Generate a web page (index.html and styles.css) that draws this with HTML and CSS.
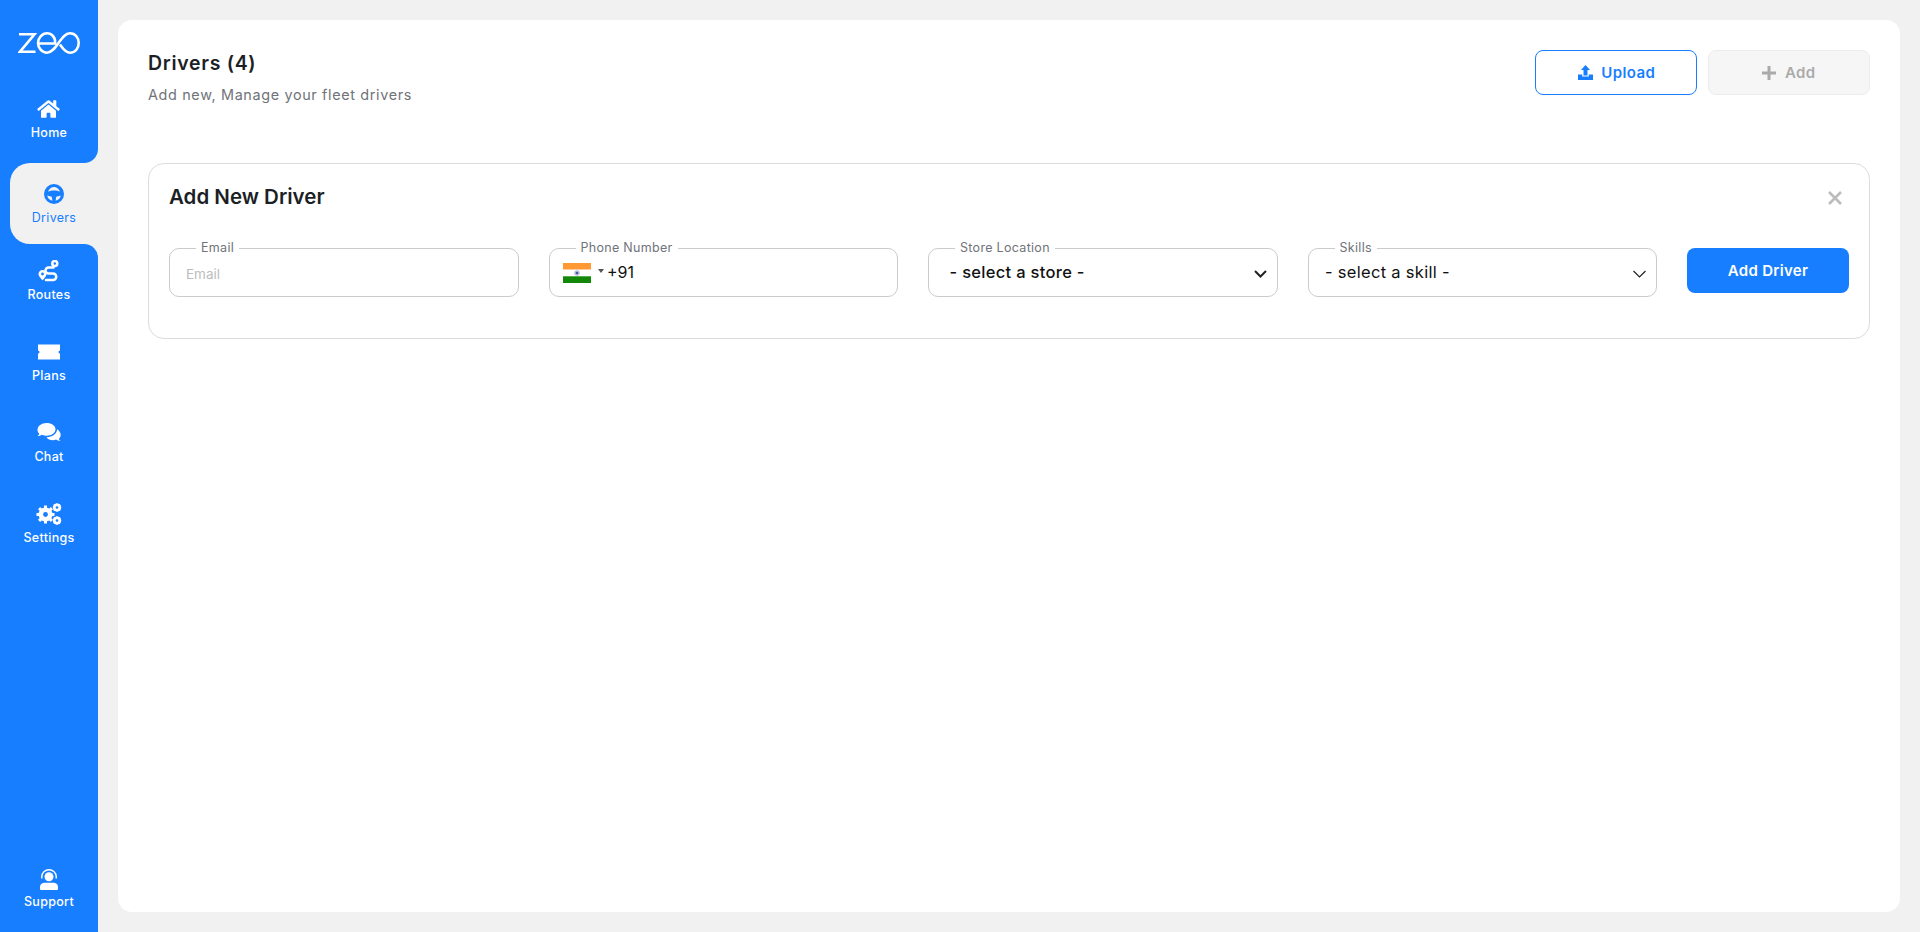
FILE: index.html
```html
<!DOCTYPE html>
<html lang="en">
<head>
<meta charset="utf-8">
<title>Drivers</title>
<link rel="stylesheet" href="styles.css">
</head>
<body>
<aside class="side">
  <div class="side-top">
    <svg class="logo" viewBox="0 0 62 22" width="62" height="22" fill="none" stroke="#fff" stroke-width="2.600" aria-label="zeo">
      <path d="M1 2.300H16.500L2 19.700H17.500"/>
      <path d="M20.500 11.500H37C38 5.500 33.500 1.300 29 1.300C24 1.300 20 6 20 11C20 16 24 20.700 29 20.700C38.500 20.700 42.500 1.300 52 1.300C57.500 1.300 60.700 6 60.700 11C60.700 16 57.500 20.700 52 20.700C47.500 20.700 44.500 16 42 12.500"/>
    </svg>
    <a class="nav-item nav-home">
      <svg class="icon" viewBox="0 0 576 512" width="23" height="20" fill="#fff"><path d="M280.400 148.300L96 300.100V464a16 16 0 0 0 16 16l112-.3a16 16 0 0 0 15.900-16V368a16 16 0 0 1 16-16h64a16 16 0 0 1 16 16v95.600a16 16 0 0 0 16 16l112 .4a16 16 0 0 0 16-16V300L295.700 148.300a12.200 12.200 0 0 0-15.300 0zM571.600 251.500L488 182.600V44.100a12 12 0 0 0-12-12h-56a12 12 0 0 0-12 12v72.600L318.500 43a48 48 0 0 0-61 0L4.300 251.500a12 12 0 0 0-1.600 16.900l25.500 31A12 12 0 0 0 45.200 301l235.200-193.700a12.200 12.200 0 0 1 15.300 0L530.900 301a12 12 0 0 0 16.900-1.600l25.500-31a12 12 0 0 0-1.700-16.900z"/></svg>
      <span>Home</span>
    </a>
  </div>
  <div class="active-wrap">
    <a class="nav-item nav-active">
      <svg class="icon" viewBox="0 0 20 20" width="20" height="20"><circle cx="10" cy="10" r="10" fill="#177eff"/><path d="M4 7.800C7 6 13 6 16 7.800C15 4.800 12.500 3 10 3C7.500 3 5 4.800 4 7.800Z" fill="#f1f1f1"/><path d="M3.200 11.500L7.800 12.800L8.400 16.800C5.700 16.200 3.700 14.200 3.200 11.500Z" fill="#f1f1f1"/><path d="M16.800 11.500L12.200 12.800L11.600 16.800C14.300 16.200 16.300 14.200 16.800 11.500Z" fill="#f1f1f1"/></svg>
      <span>Drivers</span>
    </a>
  </div>
  <div class="side-rest">
    <nav class="nav-list">
      <a class="nav-item">
        <svg class="icon" viewBox="0 0 22 22" width="22" height="22" fill="none" stroke="#fff" stroke-width="2.500"><path d="M15.500 7.500H10.500A3 3 0 0 0 10.500 13.500H15A3 3 0 0 1 15 20H8" stroke-linecap="round"/><circle cx="16.800" cy="3.500" r="2.500"/><path d="M4.500 10C2.200 10 .5 11.800 .5 14C.5 16.200 3 18.700 4.500 20.200C6 18.700 8.500 16.200 8.500 14C8.500 11.800 6.800 10 4.500 10Z" fill="#fff" stroke="none"/><circle cx="4.500" cy="14" r="1.400" fill="#177eff" stroke="none"/></svg>
        <span>Routes</span>
      </a>
      <a class="nav-item">
        <svg class="icon" viewBox="0 0 24 16" width="24" height="16" fill="#fff"><path d="M1 .5H23V6.500A1.500 1.500 0 0 0 23 9.500V15.500H1V9.500A1.500 1.500 0 0 0 1 6.500Z"/></svg>
        <span>Plans</span>
      </a>
      <a class="nav-item">
        <svg class="icon" viewBox="0 0 24 20" width="24" height="20" fill="#fff"><path d="M9.500 0C4.500 0 .5 3 .5 6.800C.5 8.400 1.200 9.800 2.400 11C1.900 12 1 12.700 .4 13.100C2.200 13.100 3.800 12.500 4.900 11.800C6.300 12.400 7.800 12.700 9.500 12.700C14.500 12.700 18.500 9.800 18.500 6.200C18.500 2.700 14.500 0 9.500 0Z"/><path d="M20 6.300C20.300 10.600 15.500 14.300 9.400 14.200C10.700 16 13 17.200 15.800 17.200C17 17.200 18.100 17 19.100 16.600C20 17.200 21.500 18 23.600 18C23 17.500 22.300 16.700 21.800 15.900C23 14.900 23.700 13.600 23.700 12.100C23.700 9.600 22.200 7.500 20 6.300Z"/></svg>
        <span>Chat</span>
      </a>
      <a class="nav-item">
        <svg class="icon" viewBox="0 0 26 22" width="26" height="22" fill="none" stroke="#fff"><circle cx="9.500" cy="11.500" r="5" stroke-width="4"/><path d="M9.500 2.500v18M.5 11.500h18M3.100 5.100l12.800 12.800M15.900 5.100L3.100 17.900" stroke-width="3"/><circle cx="9.500" cy="11.500" r="2.400" fill="#177eff" stroke="none"/><circle cx="21" cy="4.500" r="3" stroke-width="2.200"/><path d="M21 .3v8.400M16.800 4.500h8.400M18 1.500l6 6M24 1.500l-6 6" stroke-width="1.500"/><circle cx="21" cy="4.500" r="1.300" fill="#177eff" stroke="none"/><circle cx="21" cy="17.500" r="3" stroke-width="2.200"/><path d="M21 13.300v8.400M16.800 17.500h8.400M18 14.500l6 6M24 14.500l-6 6" stroke-width="1.500"/><circle cx="21" cy="17.500" r="1.300" fill="#177eff" stroke="none"/></svg>
        <span>Settings</span>
      </a>
    </nav>
    <a class="nav-item nav-support">
      <svg class="icon" viewBox="0 0 20 21" width="20" height="21" fill="#fff"><path d="M2.800 9.500V7.500A7.200 6.800 0 0 1 17.200 7.500V9.500" fill="none" stroke="#fff" stroke-width="1.400"/><circle cx="10" cy="7.800" r="4.500"/><path d="M5 13.800H15A4.500 4.500 0 0 1 19 18V20A1 1 0 0 1 18 21H2A1 1 0 0 1 1 20V18A4.500 4.500 0 0 1 5 13.800Z"/></svg>
      <span>Support</span>
    </a>
  </div>
</aside>
<main class="main">
  <section class="sheet">
    <header class="page-head">
      <div class="head-text">
        <h1 class="page-title">Drivers (4)</h1>
        <p class="page-sub">Add new, Manage your fleet drivers</p>
      </div>
      <div class="head-actions">
        <button class="btn btn-outline" type="button">
          <svg viewBox="0 0 15 15" width="15" height="15" fill="#177eff"><path d="M7.500 0L12 5H9.500V10.500H5.500V5H3Z"/><path d="M0 9.500H4.200V11.500H10.800V9.500H15V15H0Z"/></svg>
          <span>Upload</span>
        </button>
        <button class="btn btn-disabled" type="button">
          <svg viewBox="0 0 14 14" width="14" height="14" fill="none" stroke="#aaa" stroke-width="3"><path d="M7 0V14M0 7H14"/></svg>
          <span>Add</span>
        </button>
      </div>
    </header>
    <section class="panel">
      <div class="panel-head">
        <h2 class="panel-title">Add New Driver</h2>
        <svg class="close" viewBox="0 0 14 14" width="14" height="14" fill="none" stroke="#bcbcbc" stroke-width="2.600"><path d="M1 1L13 13M13 1L1 13"/></svg>
      </div>
      <form class="fields">
        <fieldset class="field">
          <legend>Email</legend>
          <input class="input" type="text" placeholder="Email">
        </fieldset>
        <fieldset class="field">
          <legend>Phone Number</legend>
          <div class="phone-row">
            <svg class="flag" viewBox="0 0 28 20" width="28" height="20"><rect width="28" height="6.700" fill="#ff9933"/><rect y="6.700" width="28" height="6.600" fill="#fff"/><rect y="13.300" width="28" height="6.700" fill="#138808"/><circle cx="14" cy="10" r="2.800" fill="#b9bfdf"/><circle cx="14" cy="10" r="1.300" fill="#4a55a5"/></svg>
            <span class="caret"></span>
            <span class="dial">+91</span>
          </div>
        </fieldset>
        <fieldset class="field">
          <legend>Store Location</legend>
          <select class="select select-store"><option>- select a store -</option></select>
          <svg class="chev" viewBox="0 0 13 8" width="13" height="8" fill="none" stroke="#222" stroke-width="2"><path d="M1 1L6.500 6.500L12 1"/></svg>
        </fieldset>
        <fieldset class="field">
          <legend>Skills</legend>
          <select class="select select-skill"><option>- select a skill -</option></select>
          <svg class="chev" viewBox="0 0 13 8" width="13" height="8" fill="none" stroke="#222" stroke-width="1.200"><path d="M.5 1L6.500 7L12.500 1"/></svg>
        </fieldset>
        <button class="btn-primary" type="button">Add Driver</button>
      </form>
    </section>
  </section>
</main>
</body>
</html>
```
FILE: styles.css
```css
* { box-sizing: border-box; }
html, body { height: 100%; }
body {
  margin: 0;
  display: flex;
  height: 932px;
  overflow: hidden;
  background: #f1f1f1;
  font-family: "Inter", "Noto Sans", sans-serif;
  color: #1c1f26;
}
.side {
  width: 98px;
  flex: none;
  display: flex;
  flex-direction: column;
  background: #f1f1f1;
}
.side-top {
  height: 163px;
  flex: none;
  background: #177eff;
  border-bottom-right-radius: 14px;
  display: flex;
  flex-direction: column;
  align-items: center;
  padding-top: 32px;
}
.logo { display: block; }
.nav-item {
  display: flex;
  flex-direction: column;
  align-items: center;
  color: #fff;
  font-size: 12.500px;
  font-weight: 500;
  line-height: 18px;
  letter-spacing: .3px;
  gap: 4px;
}
.nav-home { margin-top: 45px; gap: 5px; }
.active-wrap {
  height: 81px;
  flex: none;
  background: #177eff;
  padding-left: 10px;
}
.nav-active {
  height: 81px;
  background: #f1f1f1;
  border-radius: 20px 0 0 20px;
  color: #177eff;
  font-weight: 400;
  justify-content: center;
  padding-top: 4px;
  gap: 5px;
}
.side-rest {
  flex: 1;
  background: #177eff;
  border-top-right-radius: 14px;
  display: flex;
  flex-direction: column;
  justify-content: space-between;
  padding: 16px 0 21px;
}
.nav-list { display: flex; flex-direction: column; }
.nav-list .nav-item { height: 81px; }
.nav-list .icon { height: 22px; }
.nav-support { gap: 3px; }
.icon { display: block; }

.main {
  flex: 1;
  padding: 20px;
  min-width: 0;
}
.sheet {
  height: 892px;
  background: #fff;
  border-radius: 14px;
  padding: 28px 30px 0;
}
.page-head {
  display: flex;
  justify-content: space-between;
  align-items: flex-start;
  height: 115px;
}
.page-title {
  margin: 0;
  font-size: 19.500px;
  font-weight: 600;
  line-height: 30px;
  letter-spacing: .7px;
}
.page-sub {
  margin: 3px 0 0;
  font-size: 14.400px;
  line-height: 28px;
  letter-spacing: .65px;
  color: #70737a;
}
.head-actions { display: flex; gap: 10.500px; margin-top: 2px; }
.btn {
  width: 162.500px;
  height: 45px;
  border-radius: 8px;
  display: flex;
  align-items: center;
  justify-content: center;
  gap: 8px;
  font: 600 15px "Inter", sans-serif;
  letter-spacing: .4px;
  background: #fff;
}
.btn-outline { border: 1.500px solid #177eff; color: #177eff; padding-left: 8px; }
.btn-disabled { background: #f6f6f6; border: 1px solid #ececec; color: #aaa; gap: 9px; }

.panel {
  height: 176px;
  border: 1.500px solid #dcdcdc;
  border-radius: 16px;
  padding: 17.500px 20px 0;
}
.panel-head {
  display: flex;
  justify-content: space-between;
  align-items: center;
  height: 30px;
  padding-right: 7px;
}
.panel-title {
  margin: 0;
  font-size: 20.500px;
  font-weight: 600;
  line-height: 30px;
}
.close { margin-top: 3px; }
.fields {
  display: grid;
  grid-template-columns: 349.500px 349.500px 349.500px 349.500px 162px;
  column-gap: 30px;
  margin-top: 29.500px;
  align-items: start;
}
.field {
  position: relative;
  margin: 0;
  height: 56px;
  min-width: 0;
  padding: 0 0 8px;
  border: 1.500px solid #cbcbcb;
  border-radius: 10px;
  display: flex;
  align-items: center;
}
.field legend {
  margin-left: 26px;
  padding: 0 5px;
  font-size: 12.500px;
  line-height: 14px;
  letter-spacing: .3px;
  color: #70737a;
}
.input {
  width: 100%;
  height: 100%;
  border: 0;
  outline: 0;
  background: none;
  padding: 4px 16px 0;
  font: 13.500px "Inter", sans-serif;
}
.input::placeholder { color: #bdbdbd; opacity: 1; }
.phone-row {
  display: flex;
  align-items: center;
  padding-left: 13.500px;
}
.flag { flex: none; margin-top: 3px; }
.caret {
  width: 0;
  height: 0;
  margin: -2px 3px 0 7px;
  border-left: 3px solid transparent;
  border-right: 3px solid transparent;
  border-top: 4px solid #555;
}
.dial { font-size: 16px; color: #111; }
.select {
  appearance: none;
  width: 100%;
  height: 100%;
  border: 0;
  outline: 0;
  background: none;
  font: 450 16.500px "Inter", sans-serif;
  letter-spacing: .3px;
  color: #111;
}
.select-store { padding: 0 0 0 20.500px; }
.select-skill { padding: 0 0 0 16.500px; font-weight: 400; }
.chev {
  position: absolute;
  right: 10px;
  top: 15px;
}
.btn-primary {
  height: 45px;
  margin-top: 7px;
  padding-bottom: 2px;
  border: 0;
  border-radius: 8px;
  background: #177eff;
  color: #fff;
  font: 600 15px "Inter", sans-serif;
  letter-spacing: .3px;
}
```
